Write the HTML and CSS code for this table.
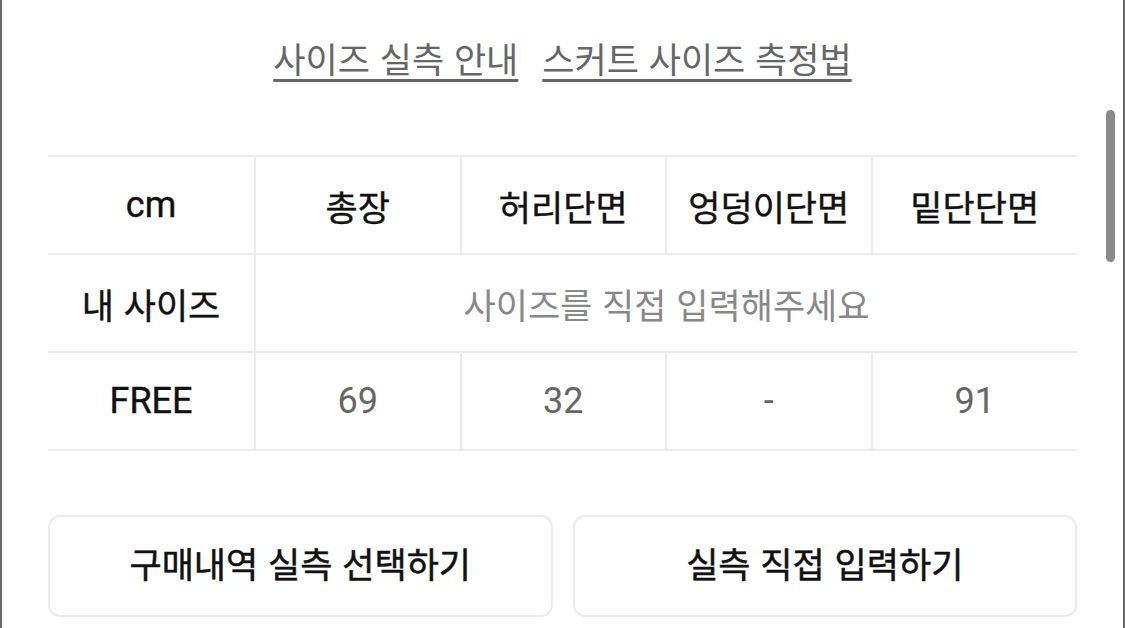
FILE: index.html
```html
<!DOCTYPE html>
<html lang="ko">
<head>
<meta charset="utf-8">
<link rel="stylesheet" href="styles.css">
</head>
<body>
<div class="frame">
  <div class="links">
    <a class="link" href="#">사이즈 실측 안내</a>
    <a class="link" href="#">스커트 사이즈 측정법</a>
  </div>
  <table class="size-table">
    <tr class="head">
      <td class="label latin">cm</td>
      <td>총장</td>
      <td>허리단면</td>
      <td>엉덩이단면</td>
      <td>밑단단면</td>
    </tr>
    <tr>
      <td class="label">내 사이즈</td>
      <td colspan="4" class="hint">사이즈를 직접 입력해주세요</td>
    </tr>
    <tr>
      <td class="label latin">FREE</td>
      <td class="val latin">69</td>
      <td class="val latin">32</td>
      <td class="val latin">-</td>
      <td class="val latin">91</td>
    </tr>
  </table>
  <div class="buttons">
    <button class="btn">구매내역 실측 선택하기</button>
    <button class="btn">실측 직접 입력하기</button>
  </div>
  <div class="scrollbar"></div>
</div>
</body>
</html>
```
FILE: styles.css
```css
html, body {
  margin: 0;
  padding: 0;
  background: #fff;
}
body {
  font-family: "Noto Sans CJK KR", sans-serif;
}
.frame {
  position: relative;
  box-sizing: border-box;
  width: 1125px;
  height: 628px;
  overflow: hidden;
  border-left: 2px solid #6a6a6a;
  border-right: 2px solid #6a6a6a;
  padding: 0 46px;
}
.links {
  display: flex;
  justify-content: center;
  gap: 24px;
  padding-top: 36px;
  height: 155px;
  box-sizing: border-box;
}
.link {
  font-size: 35px;
  color: #666;
  text-decoration: underline;
  text-decoration-thickness: 3px;
  text-underline-offset: 6px;
  line-height: 44px;
  height: 48px;
}
.size-table {
  width: 1029px;
  border-collapse: collapse;
  table-layout: fixed;
}
.size-table td {
  height: 96px;
  border: 2px solid #ececec;
  text-align: center;
  vertical-align: middle;
  font-size: 35px;
  padding: 0;
  color: #666;
  font-family: "Noto Sans CJK KR", sans-serif;
}
.size-table tr td:first-child {
  border-left: none;
  width: 206px;
}
.size-table tr td:last-child {
  border-right: none;
}
.size-table .head td,
.size-table .label {
  color: #111;
  -webkit-text-stroke: 0.4px #111;
}
.size-table .latin {
  font-family: Roboto, "Noto Sans CJK KR", sans-serif;
  font-size: 36px;
}
.size-table .val {
  color: #666;
}
.size-table .hint {
  color: #888;
}
.buttons {
  display: flex;
  gap: 20px;
  margin-top: 64px;
  width: 1029px;
}
.btn {
  flex: 1;
  height: 102px;
  background: #fff;
  border: 2px solid #ececec;
  border-radius: 12px;
  font-family: "Noto Sans CJK KR", sans-serif;
  font-size: 35px;
  font-weight: 400;
  color: #111;
  -webkit-text-stroke: 0.5px #111;
  padding: 0 0 8px;
}
.scrollbar {
  position: absolute;
  left: 1104px;
  top: 110px;
  width: 9px;
  height: 152px;
  border-radius: 5px;
  background: #8a8a8a;
}
```
